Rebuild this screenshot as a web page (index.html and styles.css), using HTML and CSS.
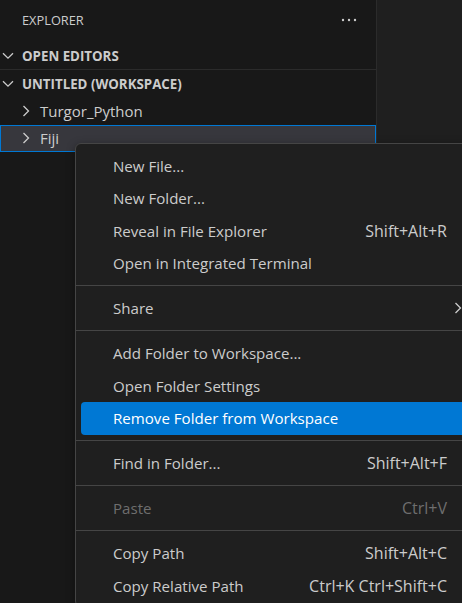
FILE: index.html
```html
<!DOCTYPE html>
<html>
<head>
<meta charset="utf-8">
<link rel="stylesheet" href="styles.css">
</head>
<body>
<div class="sidebar">
  <div class="title">
    <span class="title-text">EXPLORER</span>
    <svg class="more" width="16" height="4" viewBox="0 0 16 4"><circle cx="2" cy="2" r="1.2"/><circle cx="8" cy="2" r="1.2"/><circle cx="14" cy="2" r="1.2"/></svg>
  </div>
  <div class="section">
    <div class="section-header">
      <svg class="chev-down" width="12" height="8" viewBox="0 0 12 8"><path d="M1 1.2 L6 6.2 L11 1.2"/></svg>
      <span>OPEN EDITORS</span>
    </div>
  </div>
  <div class="section bordered">
    <div class="section-header">
      <svg class="chev-down" width="12" height="8" viewBox="0 0 12 8"><path d="M1 1.2 L6 6.2 L11 1.2"/></svg>
      <span>UNTITLED (WORKSPACE)</span>
    </div>
    <div class="tree-row">
      <svg class="chev-right" width="8" height="12" viewBox="0 0 8 12"><path d="M1.5 1 L6.5 6 L1.5 11"/></svg>
      <span>Turgor_Python</span>
    </div>
    <div class="tree-row focused">
      <svg class="chev-right" width="8" height="12" viewBox="0 0 8 12"><path d="M1.5 1 L6.5 6 L1.5 11"/></svg>
      <span>Fiji</span>
    </div>
  </div>
</div>
<div class="editor"></div>

<div class="menu">
  <div class="item"><span class="label">New File...</span></div>
  <div class="item"><span class="label">New Folder...</span></div>
  <div class="item"><span class="label">Reveal in File Explorer</span><span class="key">Shift+Alt+R</span></div>
  <div class="item"><span class="label">Open in Integrated Terminal</span></div>
  <div class="sep"></div>
  <div class="item"><span class="label">Share</span><svg class="sub" width="8" height="12" viewBox="0 0 8 12"><path d="M1.5 1 L6.5 6 L1.5 11"/></svg></div>
  <div class="sep"></div>
  <div class="item"><span class="label">Add Folder to Workspace...</span></div>
  <div class="item"><span class="label">Open Folder Settings</span></div>
  <div class="item active"><span class="label">Remove Folder from Workspace</span></div>
  <div class="sep"></div>
  <div class="item"><span class="label">Find in Folder...</span><span class="key">Shift+Alt+F</span></div>
  <div class="sep"></div>
  <div class="item disabled"><span class="label">Paste</span><span class="key">Ctrl+V</span></div>
  <div class="sep"></div>
  <div class="item"><span class="label">Copy Path</span><span class="key">Shift+Alt+C</span></div>
  <div class="item"><span class="label">Copy Relative Path</span><span class="key">Ctrl+K Ctrl+Shift+C</span></div>
</div>
</body>
</html>
```
FILE: styles.css
```css
html, body {
  margin: 0;
  padding: 0;
  height: 100%;
}
body {
  background: #1f1f1f;
  display: flex;
  overflow: hidden;
  position: relative;
  font-family: "Open Sans", "Noto Sans", sans-serif;
  color: #cccccc;
}
.sidebar {
  width: 376px;
  flex: none;
  height: 603px;
  background: #181818;
  border-right: 1px solid #2b2b2b;
}
.editor {
  flex: 1;
}
.title {
  height: 42px;
  display: flex;
  align-items: center;
  justify-content: space-between;
  padding: 0 19px 2px 22px;
  box-sizing: border-box;
}
.title-text {
  font-size: 12.8px;
}
.more {
  fill: #cccccc;
}
.section.bordered {
  border-top: 1px solid #2b2b2b;
}
.section-header {
  height: 27px;
  display: flex;
  align-items: center;
  padding-left: 2px;
  font-size: 13.3px;
  font-weight: 700;
}
.chev-down {
  margin-right: 8px;
  fill: none;
  stroke: #cccccc;
  stroke-width: 1.3;
}
.tree-row {
  height: 27.5px;
  display: flex;
  align-items: center;
  padding-left: 22px;
  font-size: 15px;
  box-sizing: border-box;
}
.chev-right {
  margin-right: 10px;
  fill: none;
  stroke: #cccccc;
  stroke-width: 1.3;
}
.tree-row.focused {
  background: #37373d;
  outline: 1px solid #0078d4;
  outline-offset: -1px;
}
.menu {
  position: absolute;
  left: 75px;
  top: 143px;
  width: 408px;
  background: #1f1f1f;
  border: 1px solid #454545;
  border-radius: 6px;
  padding: 5.5px 0 4px;
  box-shadow: 0 2px 8px rgba(0, 0, 0, 0.36);
  font-size: 15.1px;
}
.item {
  height: 32.5px;
  margin: 0 5px;
  padding: 0 32px;
  display: flex;
  align-items: center;
  justify-content: space-between;
  border-radius: 4px;
  position: relative;
  color: #cccccc;
}
.key {
  font-size: 16px;
}
.item.active {
  background: #0078d4;
  color: #ffffff;
}
.item.disabled {
  color: #6e6e6e;
}
.sub {
  position: absolute;
  right: 17px;
  top: 10px;
  fill: none;
  stroke: #cccccc;
  stroke-width: 1.3;
}
.sep {
  height: 12.5px;
  display: flex;
  align-items: center;
}
.sep::before {
  content: "";
  display: block;
  width: 100%;
  height: 1px;
  background: #454545;
}
```
